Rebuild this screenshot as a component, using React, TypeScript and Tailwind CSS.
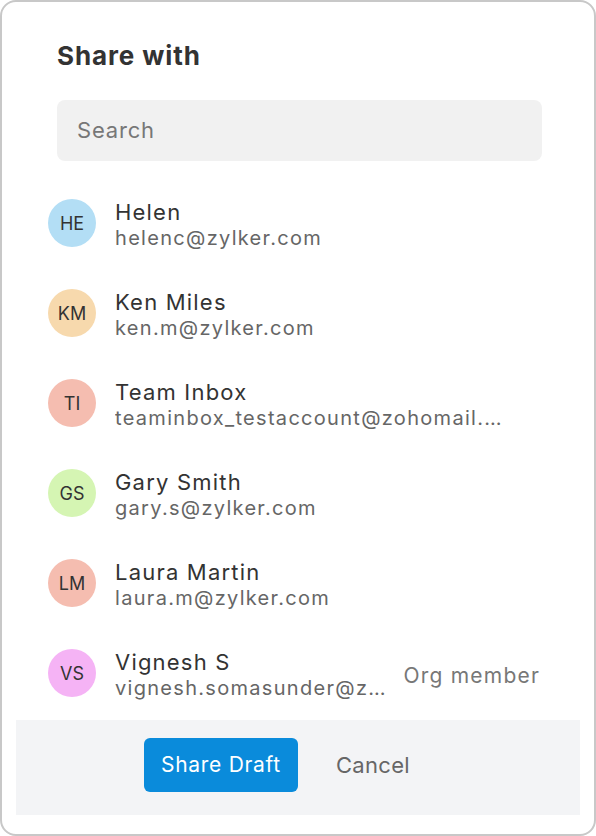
const contacts = [
  { initials: 'HE', name: 'Helen', email: 'helenc@zylker.com', color: 'bg-[#b3def5]' },
  { initials: 'KM', name: 'Ken Miles', email: 'ken.m@zylker.com', color: 'bg-[#f7d9ad]' },
  { initials: 'TI', name: 'Team Inbox', email: 'teaminbox_testaccount@zohomail.com', color: 'bg-[#f5bdb0]' },
  { initials: 'GS', name: 'Gary Smith', email: 'gary.s@zylker.com', color: 'bg-[#d5f5b3]' },
  { initials: 'LM', name: 'Laura Martin', email: 'laura.m@zylker.com', color: 'bg-[#f5bdb0]' },
  { initials: 'VS', name: 'Vignesh S', email: 'vignesh.somasunder@zylker.com', color: 'bg-[#f5b3f5]', tag: 'Org member' },
]

export default function App() {
  return (
    <div className="w-[596px] h-[836px] bg-white font-['Inter',sans-serif]">
      <div className="h-full flex flex-col border-2 border-[#c8c8c8] rounded-[16px] bg-white overflow-hidden">
        {/* Header */}
        <div className="pl-[55px] pt-[38px]">
          <h2 className="text-[26px] leading-[32px] font-bold text-[#333] tracking-[0.9px]">Share with</h2>
        </div>

        {/* Search */}
        <div className="pl-[55px] pr-[52px] pt-[28px]">
          <div className="h-[61px] rounded-[8px] bg-[#f1f1f1] flex items-center px-[20px]">
            <span className="text-[22px] text-[#777] tracking-[0.8px]">Search</span>
          </div>
        </div>

        {/* Contact list */}
        <div className="flex-1 pt-[17px] pl-[46px] pr-[54px] overflow-hidden">
          {contacts.map((c) => (
            <div key={c.initials} className="flex items-center h-[90px]">
              <div className={`w-[48px] h-[48px] rounded-full shrink-0 flex items-center justify-center text-[18px] text-[#333] ${c.color}`}>
                {c.initials}
              </div>
              <div className="ml-[19px] mt-[4px] min-w-0 max-w-[396px] flex-1">
                <div className="text-[22px] leading-[26px] text-[#333] tracking-[1.2px] truncate">{c.name}</div>
                <div className="text-[20px] leading-[27px] text-[#666] tracking-[1.3px] truncate">{c.email}</div>
              </div>
              {c.tag && <div className="ml-[14px] pt-[6px] text-[21px] text-[#777] tracking-[1.2px] shrink-0">{c.tag}</div>}
            </div>
          ))}
        </div>

        {/* Footer */}
        <div className="px-[14px] pb-[19px]">
          <div className="h-[95px] bg-[#f3f4f6] flex items-start pt-[18px] pl-[128px] gap-[38px]">
            <button className="h-[54px] w-[154px] rounded-[6px] bg-[#0a8bdb] text-white text-[21px] tracking-[0.7px]">Share Draft</button>
            <button className="h-[54px] text-[22px] text-[#666] tracking-[0.3px]">Cancel</button>
          </div>
        </div>
      </div>
    </div>
  )
}
